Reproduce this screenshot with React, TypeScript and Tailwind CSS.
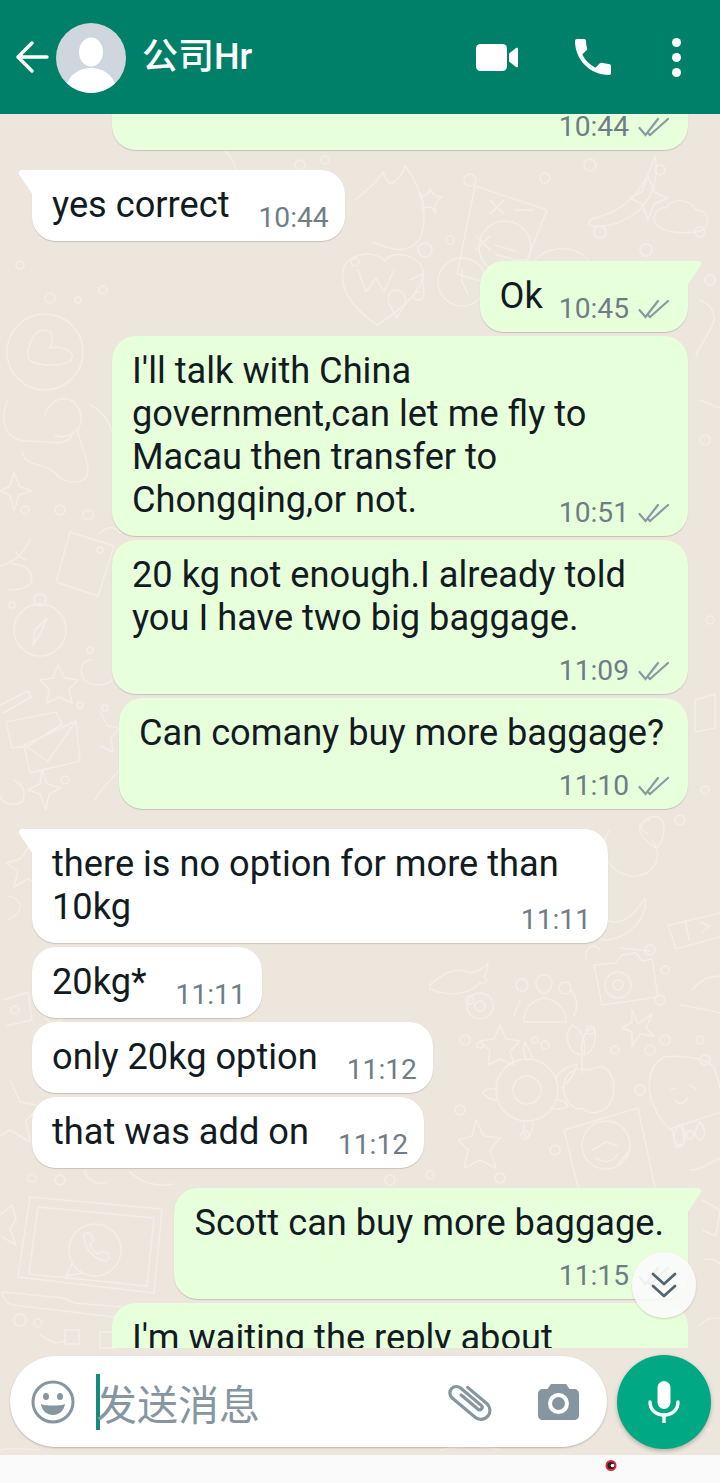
import React from 'react';

type Message = {
  side: 'in' | 'out';
  text: string;
  time: string;
  mode: 'inline' | 'overlap' | 'below';
  tail?: boolean;
  gap: 'near' | 'far';
};

const MESSAGES: Message[] = [
  { side: 'in', text: 'yes correct', time: '10:44', mode: 'inline', tail: true, gap: 'far' },
  { side: 'out', text: 'Ok', time: '10:45', mode: 'inline', tail: true, gap: 'far' },
  { side: 'out', text: "I'll talk with China government,can let me fly to Macau then transfer to Chongqing,or not.", time: '10:51', mode: 'overlap', gap: 'near' },
  { side: 'out', text: '20 kg not enough.I already told you I have two big baggage.', time: '11:09', mode: 'below', gap: 'near' },
  { side: 'out', text: 'Can comany buy more baggage?', time: '11:10', mode: 'below', gap: 'near' },
  { side: 'in', text: 'there is no option for more than 10kg', time: '11:11', mode: 'overlap', tail: true, gap: 'far' },
  { side: 'in', text: '20kg*', time: '11:11', mode: 'inline', gap: 'near' },
  { side: 'in', text: 'only 20kg option', time: '11:12', mode: 'inline', gap: 'near' },
  { side: 'in', text: 'that was add on', time: '11:12', mode: 'inline', gap: 'near' },
  { side: 'out', text: 'Scott can buy more baggage.', time: '11:15', mode: 'below', tail: true, gap: 'far' },
];

const DOTS: [number, number, number][] = [
  [300, 165, 5], [325, 160, 4], [470, 180, 6], [545, 178, 5], [590, 165, 6], [660, 170, 5], [355, 262, 4],
  [425, 250, 7], [450, 240, 4], [600, 232, 6], [646, 250, 6], [700, 232, 5], [20, 265, 4], [50, 298, 5],
  [78, 300, 3], [103, 290, 4], [25, 510, 4], [60, 510, 5], [88, 515, 5], [100, 550, 3], [12, 605, 3],
  [90, 650, 3], [80, 705, 3], [105, 708, 3], [65, 780, 4], [650, 950, 5], [665, 970, 4], [660, 1000, 5],
  [665, 1040, 5], [465, 1040, 5], [480, 1045, 3], [535, 1040, 3], [545, 1045, 4], [615, 1050, 4], [650, 1050, 5],
  [640, 1090, 5], [590, 1030, 4], [460, 1110, 5], [525, 1135, 4], [555, 1150, 5], [690, 1135, 4],
  [20, 1320, 6], [38, 1323, 4], [60, 1180, 5], [32, 1178, 4], [700, 1040, 4], [470, 1000, 4],
  [390, 1180, 5], [430, 1175, 4], [500, 1178, 5], [705, 1060, 5], [15, 1010, 4], [70, 1060, 5],
  [85, 1120, 5], [680, 820, 5], [705, 790, 4], [710, 620, 4], [705, 440, 5], [710, 280, 5],
];

// Faint doodles of the chat background, drawn in page coordinates
const Wallpaper = () => (
  <svg
    className="absolute inset-0 h-full w-full"
    viewBox="0 114 720 1341"
    fill="none"
    stroke="#f3eee7"
    strokeWidth="1.5"
    strokeLinecap="round"
    strokeLinejoin="round"
  >
    {DOTS.map(([x, y, r], i) => (
      <circle key={i} cx={x} cy={y} r={r} />
    ))}
    {/* astronaut */}
    <circle cx="45" cy="352" r="38" />
    <path d="M28 355c0-14 8-25 17-25s8 10 5 18c6-2 24 0 22 10-2 8-24 8-32 6-6-1-12-2-12-9z" />
    <path d="M8 400c-6 12-6 26 3 36 10 8 24 4 34 6 14 2 26 0 28-10M45 415c6-20 30-24 36 0 3 16-16 26-26 20M22 452c4 16 22 10 32 20 10 14 34 14 34-2-1-18-10-30-10-40M90 405c16 6 30 30 24 62" />
    <path d="M14 472l5 14 13 5-13 4-5 16-4-16-10-4 10-5z" />
    {/* glass */}
    <path d="M70 532l44 14-16 50-42-14zM100 533c8-8 16-6 20 0" />
    <path d="M30 540c-8 18-22 24-30 26M26 560c-6-2-8-4-10-8M8 590c12 0 24-2 24-12-2-10-10-14-20-14" />
    {/* compass */}
    <circle cx="40" cy="630" r="26" />
    <circle cx="40" cy="600" r="6" />
    <path d="M47 618l-7 16-7 12 2-16z" />
    <path d="M58 665l7 13 13 2-9 9 3 14-13-6-12 6 2-14-9-9 13-2z" />
    <path d="M0 705l28-14 3 6-28 16M92 660c-10 0-14 10-8 20 10 8 30 6 30-6" />
    {/* envelope */}
    <path d="M6 722l50-10 6 12-34 22-16 2-6-26zM24 745l52-24 4 40-50 12zM24 745l24 16 28-40" />
    <path d="M100 712l8 14 12 2-9 10 2 14-13-6" />
    <path d="M14 780c10 6 12 14 8 22-10 6-20 0-22-6M42 770l5 14 14 4-12 6-3 16-6-16-12-4 12-6z" />
    <path d="M95 800c10-18 30-34 40-46" />
    {/* lower left */}
    <path d="M30 845l6 14 16 4-12 8 2 16-14-8-14 8 4-16-12-8 14-4z" />
    <path d="M8 920c20-10 12-22 0-24M4 1000l24-8 4 28-26 6M60 1000c8 10 4 22-6 24-10-2-14-16-8-24z" />
    <path d="M10 1080l10 22 22 4-16 14 4 22-20-12-20 12M64 1110c-10 20 6 30 20 20 6-16-6-28-20-20z" />
    {/* laptop with call logo */}
    <path d="M30 1197l132 12-8 84-136-16zM38 1207l116 11-7 68-118-12z" />
    <path d="M3 1292l60 6 12 5 92 8-2 12-152-18c-8-2-12-10-10-13z" />
    <circle cx="95" cy="1250" r="26" />
    <path d="M73 1262l-7 14 17-3M84 1235c0 14 10 24 22 26 4-2 4-6 2-8l-6-2-4 3c-4-2-6-5-8-10l3-3-2-7c-3-2-6-1-7 1z" />
    <path d="M0 1215l12-10 4 14 -6 10 6 16-14-8M65 1330h14v14H65zM100 1332h16v16h-16zM40 1335l14 8 12-2" />
    {/* upper middle */}
    <path d="M210 140c20 10 34 30 20 50-24 18-50 6-58-14" />
    <path d="M355 200c10-8 22-18 28-28 2 6 5 10 8 12 8-4 12-10 14-18 8 10 26 40 16 70-10 20-30 14-48 6" />
    <path d="M345 265c12-16 32-12 40-4 6-10 26-8 36 4 8 14-6 36-44 60-20-14-42-36-32-60z" />
    <path d="M358 270l8 22 10-14 8 14 10-22" />
    <path d="M420 195c6 2 8 0 10-6 4 6 6 8 12 8-6 4-8 8-6 16-4-6-6-8-14-4 2-6 2-10-2-14z" />
    {/* calculator */}
    <path d="M475 186l72 24-20 50c-18-2-32 10-36 24l-34-10z" />
    <path d="M490 200l14 14M504 200l-14 14M515 210h18M476 236l14 14M490 236l-14 14" />
    <circle cx="505" cy="247" r="26" />
    <path d="M495 245l20 6M495 254l20 6" />
    {/* banana */}
    <path d="M595 218c30-8 48-24 60-62 4 22-2 42-18 56-16 12-32 16-46 14-4-2-2-6 4-8z" />
    <path d="M642 192l6-16 6 16 14 6-14 6-6 16-6-16-12-6z" />
    <path d="M658 226c-8-6-2-20 8-18 4-10 24-10 30 2 12 0 16 14 6 20-10 4-36 4-44-4z" />
    <path d="M530 268c10-24 50-26 60-4" />
    <path d="M615 270l6 26 24-14 16 6-12 12-30 12" />
    <path d="M410 280l12-6 2 20c0 6-8 8-10 4s2-6 6-6M395 290c8 0 12 8 10 14l-8 14-8-14c-2-6 0-14 6-14z" />
    <circle cx="462" cy="282" r="24" />
    <path d="M462 268v14l6 12" />
    <path d="M415 340l8 16 16 2-12 12 4 18" />
    {/* right column */}
    <path d="M700 300c10 4 18 14 12 26-4 10-12 18-16 30M700 400l20 8M695 700l20-6v34l-20 4z" />
    {/* lower right, between the bubbles */}
    <path d="M640 826c6-10 16-12 22-6 6 12-2 26-6 28-8-4-18-14-16-22zM650 820c-8 0-14 8-2 14" />
    <path d="M610 830c-14 18-4 40 20 46 22 2 36-18 22-36M605 920c14 6 28-2 40-22 4 18-16 42-42 42-6-2-6-16 2-20z" />
    <path d="M670 925l50-12M668 925l8 24 44-12M685 920l4 20M700 922l10 4-8 6" />
    <path d="M600 950c-8-10-16 0-14 10M620 948l30 3" />
    {/* fish, people, gear */}
    <path d="M430 985c14-14 30-18 40-12 8-2 14-4 18-10 0 6-2 10-4 14 4 4 4 6-4 6-12 12-32 14-50 6z" />
    <circle cx="480" cy="1006" r="13" />
    <circle cx="480" cy="1006" r="5" />
    <path d="M524 1022c0-14 8-22 20-24 12 2 22 10 22 24zM544 975c-8 0-10 8-6 14 4 6 8 6 12 0 4-6 2-14-6-14zM520 1000c-4 10-6 16-6 16M570 990c8 6 8 18 4 26" />
    <circle cx="522" cy="985" r="6" />
    <circle cx="565" cy="988" r="6" />
    {/* camera */}
    <path d="M594 965l22-2 6-8 14-2 6 8 10-2 6 38-56 8z" />
    <circle cx="618" cy="985" r="13" />
    <circle cx="618" cy="985" r="5" />
    <path d="M692 990c10-14 26-14 28-14M680 1005c10 2 26 4 40 8" />
    <path d="M632 1010l6 14 14-10-6 14 8 8-14-2-8 12 0-14-10-4 10-6z" />
    {/* star, leaf, apple */}
    <path d="M500 1025l6 14 14 2-10 10 4 14-14-6-12 6 2-14-10-10 14-2z" />
    <path d="M580 1055c-14-4-16-22-8-30 10 4 14 16 12 30 8-2 14-14 10-28-10 4-14 14-12 28 0 6 0 12 0 18" />
    <path d="M590 1070c16-10 28 6 22 30-6 14-22 16-30 8-8 4-20-10-18-22 0-14 14-20 26-16z" />
    {/* turtle */}
    <circle cx="527" cy="1090" r="31" />
    <circle cx="527" cy="1090" r="14" />
    <path d="M527 1060c-4-6-4-12-2-18l8 16M555 1078c6-8 14-12 22-14-2 10-8 18-16 24M556 1100c6 0 10 2 12 6-6 4-12 4-18 2M525 1122c-2 6-2 12 2 16 4-4 6-10 6-16M498 1100c-6 0-12-2-16-8 6-4 12-4 16-2" />
    {/* popsicle */}
    <path d="M650 1095c-2-14 0-30 14-38 14-2 40 0 50 10 6 16 8 28 10 44l-54 18c-10-8-16-20-20-34z" />
    <path d="M672 1130l4 16c4 2 8 0 8-4l-2-18M670 1090l6-2M690 1085l6 4M675 1100c4 6 10 4 12-2" />
    {/* winking tile */}
    <path d="M564 1130l74-22 18 84-70 20c-8-20-14-50-22-82z" />
    <circle cx="606" cy="1145" r="24" />
    <path d="M592 1150l14-8 12 4M596 1158c8 6 18 4 22-4M630 1150l-12 14" />
    <path d="M476 1120l8 16 16 2-10 12 6 18-16-8-16 8 4-18-10-10 14-4z" />
    <path d="M680 1125c-8 6-8 18 0 20 8-2 6-14 0-20zM700 1122c-6 8-6 14 0 18 6-2 6-10 0-18zM690 1170c10 0 18-6 30-12" />
    {/* behind the bubbles near the composer */}
    <path d="M130 1172c10 10 28 16 44 12M85 1170c0 10 14 16 22 12M702 1200l18 10-4 26-14-6M704 1260c6-2 12 0 16 4M700 1325c8-8 16-8 20-6" />
    <path d="M620 1430c20-10 60-10 90 0M440 1450c20-4 40-6 60 0M0 1450c10-2 20-2 40 0" />
  </svg>
);

const DoubleCheck = () => (
  <svg width="32" height="20" viewBox="0 0 32 20" fill="none" stroke="#8a9aa3" strokeWidth="2.2" strokeLinecap="round" className="shrink-0">
    <path d="M1.5 11l6 7L20 2" />
    <path d="M12 18L30 2" />
    <path d="M12 18l-2-2" />
  </svg>
);

const Time = ({ time, read }: { time: string; read: boolean }) => (
  <div className="flex h-[30px] shrink-0 items-center gap-[9px] text-[28.2px] leading-[30px] text-[#6f7d86]">
    <span>{time}</span>
    {read && <DoubleCheck />}
  </div>
);

const Tail = ({ side }: { side: 'in' | 'out' }) =>
  side === 'out' ? (
    <svg width="15" height="25" viewBox="0 0 15 25" className="absolute -right-[14px] top-0 fill-[#e7ffdb]">
      <path d="M0 0h11c3 0 4 3 2.500 5L0 25z" />
    </svg>
  ) : (
    <svg width="15" height="25" viewBox="0 0 15 25" className="absolute -left-[14px] top-0 fill-white">
      <path d="M15 0H4C1 0 0 3 1.500 5L15 25z" />
    </svg>
  );

const Bubble = ({ msg }: { msg: Message }) => {
  const out = msg.side === 'out';
  return (
    <div
      className={`relative w-fit max-w-[576px] shrink-0 rounded-[24px] pl-[20px] pt-[13px] pb-[8px] shadow-[0_1px_1px_rgba(0,0,0,0.16)] ${
        out ? 'mr-[32px] self-end bg-[#e7ffdb]' : 'ml-[32px] self-start bg-white'
      } ${msg.tail ? (out ? 'rounded-tr-none' : 'rounded-tl-none') : ''} ${msg.gap === 'far' ? 'mt-[20px]' : 'mt-[4px]'} ${
        msg.mode === 'inline' ? (out ? 'pr-[18px]' : 'pr-[16px]') : 'pr-[24px]'
      }`}
    >
      {msg.tail && <Tail side={msg.side} />}
      {msg.mode === 'inline' ? (
        <div className={`flex items-start ${out ? 'gap-[16px]' : 'gap-[29px]'}`}>
          <p>{msg.text}</p>
          <div className="mt-[20px]">
            <Time time={msg.time} read={out} />
          </div>
        </div>
      ) : (
        <div className="flex flex-col">
          <p>{msg.text}</p>
          <div className={`self-end ${msg.mode === 'overlap' ? '-mt-[23px]' : 'mt-[17px]'} ${out ? '-mr-[6px]' : '-mr-[7px]'}`}>
            <Time time={msg.time} read={out} />
          </div>
        </div>
      )}
    </div>
  );
};

const Header = () => (
  <header className="flex h-[114px] shrink-0 items-center bg-[#008069] pl-[16px] text-white">
    <svg width="33" height="32" viewBox="0 0 33 32" fill="none" stroke="white" strokeWidth="3.4" strokeLinecap="round" strokeLinejoin="round" className="shrink-0">
      <path d="M31 16H3M16 2L2 16l14 14" />
    </svg>
    <div className="ml-[7px] mt-[2px] h-[70px] w-[70px] shrink-0 overflow-hidden rounded-full bg-[#cfd6dd]">
      <svg viewBox="0 0 70 70" className="h-full w-full fill-white">
        <ellipse cx="35" cy="29" rx="12" ry="14.500" />
        <path d="M10 64c3-13 14-19 25-19s22 6 25 19c-6 4-16 6-25 6s-19-2-25-6z" />
      </svg>
    </div>
    <h1 className="ml-[16px] text-[36px] font-medium leading-[40px]">公司Hr</h1>
    <svg width="42" height="27" viewBox="0 0 42 27" className="ml-auto shrink-0 fill-white">
      <rect x="0" y="0" width="31" height="27" rx="4.500" />
      <path d="M33 9.500l7-5.500c1-.8 2-.2 2 1v17c0 1.200-1 1.800-2 1l-7-5.500z" />
    </svg>
    <svg width="36" height="36" viewBox="3 3 18 18" className="ml-[57px] shrink-0 fill-white">
      <path d="M20 15.500c-1.250 0-2.450-.2-3.570-.57a1.020 1.020 0 0 0-1.020.24l-2.200 2.200a15.045 15.045 0 0 1-6.590-6.580l2.200-2.210a.96.96 0 0 0 .25-1A11.360 11.360 0 0 1 8.500 4c0-.55-.45-1-1-1H4c-.55 0-1 .45-1 1 0 9.390 7.610 17 17 17 .55 0 1-.45 1-1v-3.500c0-.55-.45-1-1-1z" />
    </svg>
    <div className="ml-[61px] mr-[39px] flex shrink-0 flex-col gap-[6px]">
      <span className="h-[9px] w-[9px] rounded-full bg-white" />
      <span className="h-[9px] w-[9px] rounded-full bg-white" />
      <span className="h-[9px] w-[9px] rounded-full bg-white" />
    </div>
  </header>
);

const Composer = () => (
  <div className="relative flex h-[107px] shrink-0 items-center gap-[10px] pl-[10px]">
    <div className="flex h-[91px] w-[597px] items-center rounded-full bg-white pl-[21px] shadow-[0_1px_2px_rgba(0,0,0,0.22)]">
      <svg width="44" height="44" viewBox="0 0 44 44" className="shrink-0">
        <circle cx="22" cy="22" r="20" fill="none" stroke="#8696a0" strokeWidth="3" />
        <ellipse cx="15" cy="16.500" rx="3" ry="3.500" fill="#8696a0" />
        <ellipse cx="29" cy="16.500" rx="3" ry="3.500" fill="#8696a0" />
        <path d="M10 24c4 2 20 2 24 0-1 7-6 11-12 11s-11-4-12-11z" fill="#8696a0" />
      </svg>
      <span className="ml-[21px] h-[56px] w-[4px] shrink-0 bg-[#128c7e]" />
      <span className="-ml-[4px] text-[41px] leading-[56px] text-[#8696a0] [font-family:'Noto_Sans_CJK_SC',sans-serif]">发送消息</span>
      <svg width="52" height="52" viewBox="0 0 52 52" fill="none" stroke="#8696a0" strokeWidth="3.200" strokeLinecap="round" strokeLinejoin="round" className="ml-auto shrink-0">
        <path transform="rotate(-50 26 26)" d="M35 14v25a9 9 0 0 1-18 0V9a6.500 6.500 0 0 1 13 0v27a2.500 2.500 0 0 1-5 0V14" />
      </svg>
      <svg width="41" height="36" viewBox="0 0 41 36" className="ml-[41px] mr-[28px] shrink-0">
        <path d="M13 0h15l3.500 5H36c3 0 5 2 5 5v21c0 3-2 5-5 5H5c-3 0-5-2-5-5V10c0-3 2-5 5-5h4.500z" fill="#8696a0" />
        <circle cx="20.500" cy="19.500" r="10.500" fill="white" />
        <circle cx="20.500" cy="19.500" r="6.500" fill="#8696a0" />
      </svg>
    </div>
    <div className="flex h-[94px] w-[94px] shrink-0 items-center justify-center rounded-full bg-[#00a884] shadow-[0_2px_4px_rgba(0,0,0,0.25)]">
      <svg width="32" height="42" viewBox="0 0 32 42" className="shrink-0">
        <rect x="9.500" y="0" width="13" height="28" rx="6.500" fill="white" />
        <path d="M2 21c0 8 6 13 14 13s14-5 14-13" fill="none" stroke="white" strokeWidth="3.400" strokeLinecap="round" />
        <path d="M16 33v9" stroke="white" strokeWidth="3.400" />
      </svg>
    </div>
  </div>
);

const App: React.FC = () => {
  return (
    <div className="flex h-[1483px] w-[720px] flex-col overflow-hidden bg-[#fafafa] text-[36.2px] leading-[43px] text-[#111b21] [font-family:Roboto,'Noto_Sans_CJK_SC',sans-serif]">
      <Header />

      <main className="relative flex min-h-0 flex-1 flex-col bg-[#ede6dd]">
        <Wallpaper />

        {/* Messages */}
        <div className="relative flex min-h-0 flex-1 flex-col overflow-hidden">
          <div className="mr-[32px] flex h-[36px] w-[576px] shrink-0 items-end justify-end self-end rounded-b-[24px] bg-[#e7ffdb] pb-[8px] pr-[18px] shadow-[0_1px_1px_rgba(0,0,0,0.16)]">
            <Time time="10:44" read />
          </div>
          {MESSAGES.map((m, i) => (
            <Bubble key={i} msg={m} />
          ))}
          <div className="mr-[32px] mt-[4px] w-[576px] shrink-0 self-end rounded-t-[24px] bg-[#e7ffdb] pl-[20px] pt-[13px]">
            <p>I'm waiting the reply about</p>
          </div>
        </div>

        {/* Scroll to bottom */}
        <button className="absolute bottom-[137px] right-[24px] flex h-[66px] w-[64px] items-center justify-center rounded-full bg-[#fafbfa]/90 shadow-[0_1px_2px_rgba(0,0,0,0.16)]">
          <svg width="26" height="26" viewBox="0 0 26 26" fill="none" stroke="#54656f" strokeWidth="2.800" strokeLinecap="round" strokeLinejoin="round">
            <path d="M2 2l11 10L24 2M2 14l11 10 11-10" />
          </svg>
        </button>

        <Composer />
      </main>

      {/* System navigation strip */}
      <div className="flex h-[28px] shrink-0 items-start bg-[#fafafa] pl-[605px] pt-[4px]">
        <svg width="12" height="14" viewBox="0 0 12 14">
          <circle cx="6" cy="6.500" r="4.500" fill="#222" stroke="#d9273a" strokeWidth="2" />
          <circle cx="7.500" cy="6.500" r="1.800" fill="white" />
        </svg>
      </div>
    </div>
  );
};

export default App;
